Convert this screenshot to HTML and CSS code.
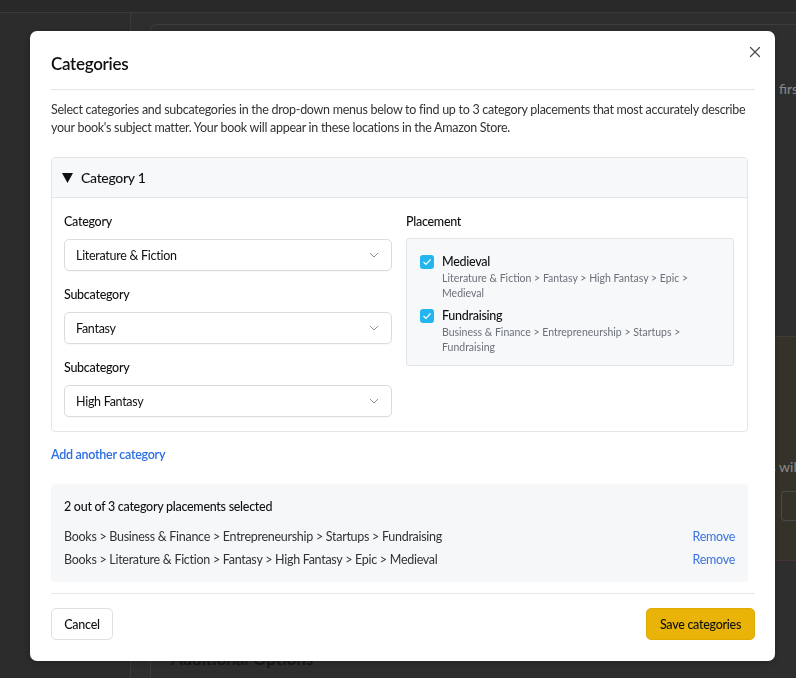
FILE: index.html
```html
<!DOCTYPE html>
<html lang="en">
<head>
<meta charset="utf-8">
<title>Categories</title>
<link rel="stylesheet" href="styles.css">
</head>
<body>
<div class="page">
  <header class="topbar"></header>
  <div class="page-body">
    <aside class="sidebar"></aside>
    <main class="main">
      <section class="bg-card">
        <p class="bg-text bg-first">first</p>
        <div class="bg-notice">
          <p class="bg-text bg-rds">rds will</p>
          <div class="bg-input"></div>
        </div>
        <h2 class="bg-heading">Additional Options</h2>
      </section>
    </main>
  </div>
</div>

<div class="overlay">
  <div class="modal" role="dialog" aria-labelledby="modal-title">
    <button class="close" aria-label="Close">
      <svg width="12" height="12" viewBox="0 0 12 12"><path d="M1.5 1.5 L10.5 10.5 M10.5 1.5 L1.5 10.5" stroke="#4a4a4a" stroke-width="1.2" fill="none" stroke-linecap="round"/></svg>
    </button>
    <header class="modal-header">
      <h1 id="modal-title" class="modal-title">Categories</h1>
    </header>
    <div class="modal-body">
      <p class="intro">Select categories and subcategories in the drop-down menus below to find up to 3 category placements that most accurately describe your book's subject matter. Your book will appear in these locations in the Amazon Store.</p>

      <div class="cat-box">
        <div class="cat-head">
          <svg class="caret" width="11" height="10" viewBox="0 0 11 10"><polygon points="0,0 11,0 5.5,10" fill="#0f1111"/></svg>
          <span>Category 1</span>
        </div>
        <div class="cat-grid">
          <div class="cat-col">
            <div class="field">
              <div class="label">Category</div>
              <div class="select"><span>Literature &amp; Fiction</span><svg width="10" height="6" viewBox="0 0 10 6"><polyline points="1,1 5,5 9,1" fill="none" stroke="#8a8f95" stroke-width="1"/></svg></div>
            </div>
            <div class="field">
              <div class="label">Subcategory</div>
              <div class="select"><span>Fantasy</span><svg width="10" height="6" viewBox="0 0 10 6"><polyline points="1,1 5,5 9,1" fill="none" stroke="#8a8f95" stroke-width="1"/></svg></div>
            </div>
            <div class="field">
              <div class="label">Subcategory</div>
              <div class="select"><span>High Fantasy</span><svg width="10" height="6" viewBox="0 0 10 6"><polyline points="1,1 5,5 9,1" fill="none" stroke="#8a8f95" stroke-width="1"/></svg></div>
            </div>
          </div>
          <div class="cat-col">
            <div class="field">
              <div class="label">Placement</div>
              <div class="placement">
                <div class="pl-item">
                  <span class="check"><svg width="10" height="8" viewBox="0 0 10 8"><polyline points="1.5,4 4,6.5 8.5,1.5" fill="none" stroke="#fff" stroke-width="1.2"/></svg></span>
                  <div class="pl-text">
                    <div class="pl-name">Medieval</div>
                    <div class="pl-path">Literature &amp; Fiction &gt; Fantasy &gt; High Fantasy &gt; Epic &gt; Medieval</div>
                  </div>
                </div>
                <div class="pl-item">
                  <span class="check"><svg width="10" height="8" viewBox="0 0 10 8"><polyline points="1.5,4 4,6.5 8.5,1.5" fill="none" stroke="#fff" stroke-width="1.2"/></svg></span>
                  <div class="pl-text">
                    <div class="pl-name">Fundraising</div>
                    <div class="pl-path">Business &amp; Finance &gt; Entrepreneurship &gt; Startups &gt; Fundraising</div>
                  </div>
                </div>
              </div>
            </div>
          </div>
        </div>
      </div>

      <a class="add-link" href="#">Add another category</a>

      <div class="summary">
        <div class="summary-title">2 out of 3 category placements selected</div>
        <div class="summary-row"><span>Books &gt; Business &amp; Finance &gt; Entrepreneurship &gt; Startups &gt; Fundraising</span><a href="#" class="remove">Remove</a></div>
        <div class="summary-row"><span>Books &gt; Literature &amp; Fiction &gt; Fantasy &gt; High Fantasy &gt; Epic &gt; Medieval</span><a href="#" class="remove">Remove</a></div>
      </div>
    </div>
    <footer class="modal-footer">
      <button class="btn btn-cancel">Cancel</button>
      <button class="btn btn-save">Save categories</button>
    </footer>
  </div>
</div>
</body>
</html>
```

FILE: styles.css
```css
* { box-sizing: border-box; margin: 0; padding: 0; }

html, body { width: 796px; height: 678px; overflow: hidden; }

body {
  font-family: Lato, "Open Sans", sans-serif;
  font-size: 12.5px;
  letter-spacing: -0.28px;
  background: #434343;
  color: #0f1111;
}

/* ---------- background page (dimmed) ---------- */
.page { height: 678px; display: flex; flex-direction: column; }
.topbar { height: 13px; flex: none; background: #3c3c3c; border-bottom: 1px solid #535353; }
.page-body { flex: 1; display: flex; }
.sidebar { width: 131px; flex: none; background: #3f3f3f; border-right: 1px solid #535353; }
.main { flex: 1; padding: 11px 0 0 19px; display: flex; flex-direction: column; }
.bg-card {
  flex: 1;
  border: 1px solid #565656;
  border-right: none;
  border-bottom: none;
  border-radius: 6px 0 0 0;
  padding-top: 54px;
}
.bg-text { color: #c5c5c5; font-size: 14px; line-height: 20px; letter-spacing: 0; white-space: nowrap; }
.bg-first { padding-left: 628px; }
.bg-notice {
  margin-top: 237px;
  height: 225px;
  background: #4c493c;
  border-top: 1px solid #5a574a;
  border-bottom: 1px solid #6a4a4a;
  padding-top: 120px;
}
.bg-rds { padding-left: 606px; }
.bg-input {
  margin: 14px 0 0 630px;
  height: 30px;
  border: 1px solid #6a6a6a;
  border-right: none;
  border-radius: 4px 0 0 4px;
}
.bg-heading {
  padding-left: 20px;
  margin-top: 87px;
  font-size: 17px;
  line-height: 22px;
  font-weight: 600;
  letter-spacing: 0;
  color: #1f1f1f;
}

/* ---------- overlay & modal ---------- */
.overlay { position: fixed; inset: 0; background: rgba(0, 0, 0, 0.3); }

.modal {
  position: absolute;
  left: 30px;
  top: 31px;
  width: 745px;
  height: 630px;
  background: #fff;
  border-radius: 7px;
  padding: 0 20px 21px 21px;
  display: flex;
  flex-direction: column;
  box-shadow: 0 2px 8px rgba(0, 0, 0, 0.25);
}

.close {
  position: absolute;
  top: 15px;
  right: 14px;
  width: 12px;
  height: 12px;
  border: none;
  background: none;
  display: flex;
}

.modal-header {
  padding: 21px 0 13px;
  border-bottom: 1px solid #e6e6e6;
}
.modal-title { font-size: 17px; line-height: 24px; font-weight: 600; letter-spacing: -0.3px; color: #0f1111; }

.modal-body { padding-right: 7px; }

.intro {
  margin-top: 11px;
  line-height: 18px;
  color: #333;
}

.cat-box {
  margin-top: 20px;
  border: 1px solid #e3e6e8;
  border-radius: 4px;
}
.cat-head {
  height: 40px;
  display: flex;
  align-items: center;
  gap: 8px;
  padding: 0 10px;
  background: #f7f8fa;
  border-bottom: 1px solid #e3e6e8;
  border-radius: 4px 4px 0 0;
  font-size: 14px;
  letter-spacing: -0.3px;
  font-weight: 500;
}
.cat-grid {
  display: grid;
  grid-template-columns: 1fr 1fr;
  gap: 14px;
  padding: 15px 13px 14px 12px;
}
.cat-col { display: flex; flex-direction: column; gap: 15px; }
.label { line-height: 18px; font-weight: 500; margin-bottom: 8px; }
.select {
  height: 32px;
  display: flex;
  align-items: center;
  justify-content: space-between;
  padding: 0 12px 0 11px;
  border: 1px solid #d8dbdf;
  border-radius: 5px;
  color: #0f1111;
  box-shadow: 0 1px 1px rgba(0, 0, 0, 0.03);
}

.placement {
  margin-top: -1px;
  background: #f7f8fa;
  border: 1px solid #e0e3e7;
  border-radius: 3px;
  padding: 14px 13px 11px;
  display: flex;
  flex-direction: column;
  gap: 7px;
}
.pl-item { display: flex; gap: 8px; }
.check {
  flex: none;
  width: 14px;
  height: 14px;
  margin-top: 2px;
  background: #23b5ee;
  border-radius: 3px;
  display: flex;
  align-items: center;
  justify-content: center;
}
.pl-name { line-height: 18px; font-weight: 500; }
.pl-path { font-size: 10.5px; line-height: 14.5px; letter-spacing: 0; color: #6b7079; }

.add-link {
  display: block;
  margin-top: 14px;
  line-height: 18px;
  font-weight: 600;
  color: #2d6ee0;
  text-decoration: none;
}

.summary {
  margin-top: 20px;
  background: #f6f7f9;
  border-radius: 4px;
  padding: 14px 13px 11px;
}
.summary-title { line-height: 18px; font-weight: 500; margin-bottom: 9px; }
.summary-row {
  display: flex;
  justify-content: space-between;
  line-height: 23px;
  color: #333;
}
.remove { color: #3a72e0; text-decoration: none; }

.modal-footer {
  margin-top: auto;
  border-top: 1px solid #e8e8e8;
  padding-top: 14px;
  display: flex;
  justify-content: space-between;
}
.btn {
  height: 32px;
  border-radius: 5px;
  font-family: inherit;
  font-size: 12.5px;
  letter-spacing: -0.28px;
  font-weight: 500;
  color: #0f1111;
  padding: 0 12px;
  white-space: nowrap;
}
.btn-cancel { background: #fff; border: 1px solid #dde0e4; width: 62px; }
.btn-save { background: #e9b308; border: 1px solid #e0ab05; width: 109px; }
```
